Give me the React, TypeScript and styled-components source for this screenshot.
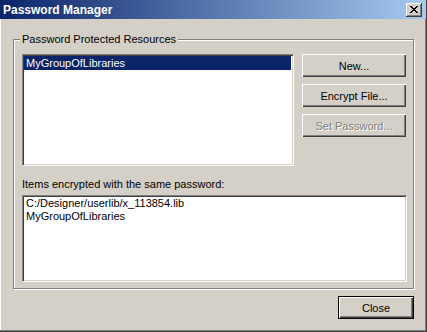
import React from "react";
import styled, { createGlobalStyle } from "styled-components";

const Global = createGlobalStyle`
  html, body { margin: 0; padding: 0; background: #D4D0C8; }
  * { box-sizing: border-box; }
`;

const Window = styled.div`
  width: 427px;
  height: 332px;
  background: #D4D0C8;
  border-right: 1px solid #404040;
  border-bottom: 1px solid #404040;
  box-shadow: inset -1px -1px 0 #808080, inset 1px 0 0 #ffffff;
  font-family: "Liberation Sans", Arial, sans-serif;
  font-size: 11px;
  color: #000;
  display: flex;
  flex-direction: column;
`;

const TitleBar = styled.div`
  height: 19px;
  background: linear-gradient(to right, #0A246A, #A6CAF0);
  display: flex;
  align-items: center;
  justify-content: space-between;
  padding: 0 4px 0 3px;
`;

const Title = styled.span`
  color: #fff;
  font-weight: bold;
  font-size: 12px;
`;

const CaptionButton = styled.div`
  width: 16px;
  height: 14px;
  background: #D4D0C8;
  box-shadow: inset -1px -1px 0 #404040, inset 1px 1px 0 #ffffff, inset -2px -2px 0 #808080;
  display: flex;
  align-items: center;
  justify-content: center;
`;

const Body = styled.div`
  flex: 1;
  display: flex;
  flex-direction: column;
  padding: 20px 12px 0 13px;
`;

const GroupBox = styled.div`
  position: relative;
  width: 401px;
  height: 250px;
  border: 1px solid #808080;
  box-shadow: 1px 1px 0 #ffffff, inset 1px 1px 0 #ffffff;
  padding: 14px 7px 0 8px;
  display: flex;
  flex-direction: column;
`;

const GroupLabel = styled.span`
  position: absolute;
  left: 6px;
  top: -8px;
  padding: 0 2px;
  background: #D4D0C8;
  line-height: 14px;
`;

const TopRow = styled.div`
  display: flex;
  gap: 8px;
`;

const ListBox = styled.div<{ $w: number; $h: number }>`
  width: ${(p) => p.$w}px;
  height: ${(p) => p.$h}px;
  background: #fff;
  border-top: 1px solid #808080;
  border-left: 1px solid #808080;
  border-right: 1px solid #ffffff;
  border-bottom: 1px solid #ffffff;
  box-shadow: inset 1px 1px 0 #404040, inset -1px -1px 0 #D4D0C8;
  padding: 1px 2px 2px 1px;
  display: flex;
  flex-direction: column;
`;

const ListItem = styled.div<{ $selected?: boolean }>`
  height: 14px;
  line-height: 14px;
  padding-left: 2px;
  background: ${(p) => (p.$selected ? "#0A246A" : "transparent")};
  color: ${(p) => (p.$selected ? "#fff" : "#000")};
  white-space: nowrap;
`;

const PlainItem = styled.div`
  height: 13px;
  line-height: 13px;
  padding-left: 2px;
  white-space: nowrap;
`;

const ButtonColumn = styled.div`
  display: flex;
  flex-direction: column;
  gap: 7px;
`;

const Button = styled.div<{ $w: number; $disabled?: boolean; $default?: boolean }>`
  width: ${(p) => p.$w}px;
  height: 23px;
  background: #D4D0C8;
  display: flex;
  align-items: center;
  justify-content: center;
  color: ${(p) => (p.$disabled ? "#808080" : "#000")};
  text-shadow: ${(p) => (p.$disabled ? "1px 1px 0 #ffffff" : "none")};
  border: ${(p) => (p.$default ? "1px solid #000" : "none")};
  box-shadow: ${(p) =>
    p.$default
      ? "inset 1px 1px 0 #ffffff, inset -1px -1px 0 #404040, inset -2px -2px 0 #808080"
      : "inset 1px 1px 0 #ffffff, inset -1px -1px 0 #404040, inset -2px -2px 0 #808080"};
`;

const SubLabel = styled.div`
  margin-top: 12px;
  height: 17px;
  line-height: 13px;
`;

const Footer = styled.div`
  display: flex;
  justify-content: flex-end;
  padding-top: 7px;
  padding-right: 0px;
`;

export default function App() {
  return (
    <>
      <Global />
      <Window>
        <TitleBar>
          <Title>Password Manager</Title>
          <CaptionButton>
            <svg width="8" height="7" viewBox="0 0 8 7" shapeRendering="crispEdges">
              <path
                d="M0 0h2v1H0zM6 0h2v1H6zM1 1h2v1H1zM5 1h2v1H5zM2 2h4v1H2zM3 3h2v1H3zM2 4h4v1H2zM1 5h2v1H1zM5 5h2v1H5zM0 6h2v1H0zM6 6h2v1H6z"
                fill="#000"
              />
            </svg>
          </CaptionButton>
        </TitleBar>
        <Body>
          <GroupBox>
            <GroupLabel>Password Protected Resources</GroupLabel>
            <TopRow>
              <ListBox $w={272} $h={112}>
                <ListItem $selected>MyGroupOfLibraries</ListItem>
              </ListBox>
              <ButtonColumn>
                <Button $w={104}>New...</Button>
                <Button $w={104}>Encrypt File...</Button>
                <Button $w={104} $disabled>
                  Set Password...
                </Button>
              </ButtonColumn>
            </TopRow>
            <SubLabel>Items encrypted with the same password:</SubLabel>
            <ListBox $w={385} $h={87}>
              <PlainItem>C:/Designer/userlib/x_113854.lib</PlainItem>
              <PlainItem>MyGroupOfLibraries</PlainItem>
            </ListBox>
          </GroupBox>
          <Footer>
            <Button $w={76} $default>
              Close
            </Button>
          </Footer>
        </Body>
      </Window>
    </>
  );
}
